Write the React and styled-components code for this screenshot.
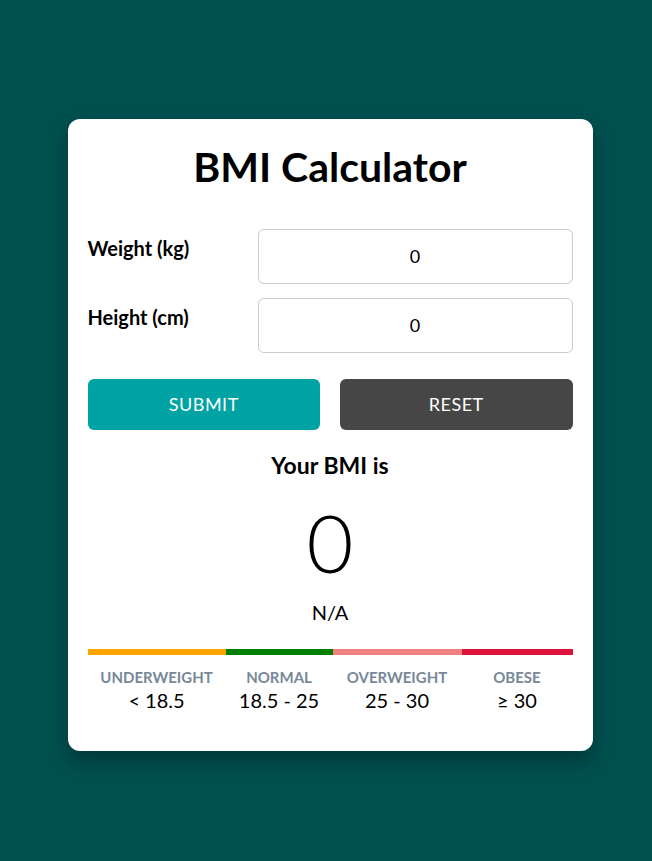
import React, { useState } from 'react'
import styled, { createGlobalStyle } from 'styled-components'

const GlobalStyle = createGlobalStyle`
    * {
        box-sizing: border-box;
    }

    body {
        margin: 0;
        background: #015050;
        font-family: Lato, "Noto Sans", sans-serif;
        color: #000;
    }
`

const ranges = [
    { name: 'Underweight', range: '< 18.5', color: '#ffa500', size: 138 },
    { name: 'Normal', range: '18.5 - 25', color: '#008000', size: 107 },
    { name: 'Overweight', range: '25 - 30', color: '#f08080', size: 129 },
    { name: 'Obese', range: '≥ 30', color: '#dc143c', size: 111 },
]

const App = () => {
    const [weight, setWeight] = useState(0)
    const [height, setHeight] = useState(0)
    const [bmi, setBmi] = useState(0)

    const submit = () => {
        const h = height / 100
        if (weight > 0 && h > 0) setBmi((weight / (h * h)).toFixed(1))
    }

    const reset = () => {
        setWeight(0)
        setHeight(0)
        setBmi(0)
    }

    return (
        <>
            <GlobalStyle />
            <Page>
                <Card>
                    <Title>BMI Calculator</Title>

                    <Field>
                        <Label>Weight (kg)</Label>
                        <Input type="number" value={weight} onChange={e => setWeight(e.target.value)} />
                    </Field>
                    <Field>
                        <Label>Height (cm)</Label>
                        <Input type="number" value={height} onChange={e => setHeight(e.target.value)} />
                    </Field>

                    <Buttons>
                        <Button $bg="#00a3a3" onClick={submit}>Submit</Button>
                        <Button $bg="#464646" onClick={reset}>Reset</Button>
                    </Buttons>

                    <Result>
                        <ResultTitle>Your BMI is</ResultTitle>
                        <Value>{bmi}</Value>
                        <Category>N/A</Category>
                    </Result>

                    <Scale $cols={ranges.map(r => r.size + 'fr').join(' ')}>
                        {ranges.map(r => (
                            <Segment key={r.name} $color={r.color}>
                                <SegName>{r.name}</SegName>
                                <SegRange>{r.range}</SegRange>
                            </Segment>
                        ))}
                    </Scale>
                </Card>
            </Page>
        </>
    )
}

const Page = styled.div`
    min-height: 100vh;
    display: flex;
    align-items: center;
    justify-content: center;
    padding: 8px 0 0 8px;
`

const Card = styled.div`
    width: 525px;
    background: #fff;
    border-radius: 12px;
    padding: 22px 20px 39px;
    box-shadow: 0 10px 20px rgba(0, 0, 0, 0.3);
`

const Title = styled.h1`
    margin: 0 0 36px;
    text-align: center;
    font-size: 41px;
    font-weight: 700;
    line-height: 52px;
`

const Field = styled.div`
    display: grid;
    grid-template-columns: 170px 1fr;
    align-items: start;
    margin-bottom: 14px;
`

const Label = styled.label`
    font-size: 20px;
    font-weight: 700;
    padding-top: 7px;
`

const Input = styled.input`
    height: 55px;
    width: 100%;
    border: 1px solid #ccc;
    border-radius: 6px;
    text-align: center;
    font-family: inherit;
    font-size: 18px;
    outline: none;

    &::-webkit-inner-spin-button,
    &::-webkit-outer-spin-button {
        -webkit-appearance: none;
        margin: 0;
    }
`

const Buttons = styled.div`
    display: grid;
    grid-template-columns: 1fr 1fr;
    gap: 20px;
    margin-top: 26px;
`

const Button = styled.button`
    height: 51px;
    border: none;
    border-radius: 6px;
    background: ${p => p.$bg};
    color: #fff;
    font-family: inherit;
    font-size: 18px;
    letter-spacing: 0.5px;
    text-transform: uppercase;
    cursor: pointer;
`

const Result = styled.div`
    display: flex;
    flex-direction: column;
    align-items: center;
    margin-top: 21px;
`

const ResultTitle = styled.h2`
    margin: 0;
    font-size: 23px;
    font-weight: 700;
`

const Value = styled.div`
    font-size: 81px;
    font-weight: 300;
    line-height: 1;
    margin-top: 22px;
`

const Category = styled.div`
    font-size: 20px;
    margin-top: 18px;
`

const Scale = styled.div`
    display: grid;
    grid-template-columns: ${p => p.$cols};
    margin-top: 25px;
`

const Segment = styled.div`
    display: flex;
    flex-direction: column;
    align-items: center;
    border-top: 6px solid ${p => p.$color};
    padding-top: 13px;
`

const SegName = styled.span`
    font-size: 15px;
    font-weight: 700;
    text-transform: uppercase;
    color: #778899;
`

const SegRange = styled.span`
    font-size: 20px;
    margin-top: 2px;
`

export default App
